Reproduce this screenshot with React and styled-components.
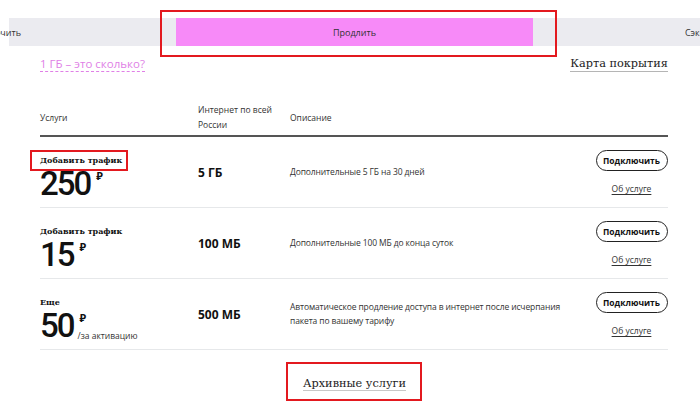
import styled, { createGlobalStyle } from "styled-components";

//<---------------------------------------Start of CSS - styling------------------------------------------------>

const GlobalStyle = createGlobalStyle`
  html, body {
    margin: 0;
    padding: 0;
    background: #ffffff;
  }
  body {
    font-family: "Open Sans", "Noto Sans", Arial, sans-serif;
    color: #222;
  }
`;

const Page = styled.div`
  width: 100%;
  height: 411px;
  overflow: hidden;
  padding-top: 18px;
  box-sizing: border-box;
`;

const Switcher = styled.div`
  display: flex;
  justify-content: center;
  background: #ebebf0;
  height: 28px;
  margin-left: 9px;
`;

const Segment = styled.div`
  position: relative;
  flex: 0 0 357px;
  display: flex;
  align-items: center;
  justify-content: center;
  font-size: 9px;
  color: #333;
  background: ${props => props.active ? "#f78af8" : "transparent"};

  &::after {
    content: ${props => props.marked ? "''" : "none"};
    position: absolute;
    top: -8px;
    bottom: -11px;
    left: -16px;
    right: -24px;
    border: 2px solid #e3191f;
    pointer-events: none;
  }
`;

const Content = styled.div`
  width: 628px;
  margin-left: 40px;
`;

const Links = styled.div`
  display: flex;
  justify-content: space-between;
  align-items: center;
  margin-top: 10px;
  height: 16px;
`;

const HowMuch = styled.span`
  font-size: 11.5px;
  color: #e07fe6;
  border-bottom: 1px dashed #e07fe6;
  line-height: 14px;
`;

const MapLink = styled.span`
  font-family: "DejaVu Serif", "Liberation Serif", serif;
  font-size: 11.3px;
  color: #222;
  line-height: 14px;
  border-bottom: 1px solid #b5b5b5;
`;

const Head = styled.div`
  display: flex;
  align-items: center;
  margin-top: 30px;
  padding-bottom: 3px;
  border-bottom: 2px solid #555;
  font-size: 8.5px;
  line-height: 15px;
  color: #333;
`;

const Col = styled.div`
  flex: ${props => props.grow ? "1" : `0 0 ${props.w}px`};
  box-sizing: border-box;
`;

const Row = styled.div`
  display: flex;
  align-items: center;
  height: 70px;
  border-bottom: 1px solid #e6e8ea;
`;

const Label = styled.div`
  position: relative;
  display: inline-block;
  font-family: "DejaVu Serif", "Liberation Serif", serif;
  font-weight: 700;
  font-size: 8px;
  line-height: 11px;
  color: #111;
  margin-bottom: 2px;

  &::after {
    content: ${props => props.marked ? "''" : "none"};
    position: absolute;
    top: -5px;
    bottom: -5px;
    left: -10px;
    right: -6px;
    border: 2px solid #e3191f;
  }
`;

const Price = styled.div`
  display: flex;
  align-items: stretch;
`;

const Amount = styled.span`
  font-family: Roboto, "Open Sans", sans-serif;
  font-size: 33px;
  font-weight: 500;
  line-height: 31px;
  letter-spacing: -2px;
  color: #111;
`;

const Side = styled.div`
  display: flex;
  flex-direction: column;
  justify-content: space-between;
  margin-left: 6px;
  padding: 3px 0 0;
`;

const Rub = styled.span`
  font-size: 11px;
  font-weight: 700;
  line-height: 10px;
  color: #111;
`;

const PerText = styled.span`
  font-size: 8.5px;
  line-height: 10px;
  color: #333;
  margin-left: -2px;
`;

const Volume = styled.div`
  font-size: 12px;
  font-weight: 700;
  color: #111;
`;

const Desc = styled.div`
  font-size: 8.5px;
  line-height: 14px;
  letter-spacing: -0.12px;
  color: #333;
  max-width: 290px;
`;

const Actions = styled.div`
  display: flex;
  flex-direction: column;
  align-items: center;
  gap: 13px;
`;

const ConnectButton = styled.button`
  width: 72px;
  height: 21px;
  border: 1.5px solid #222;
  border-radius: 11px;
  background: #fff;
  font-family: inherit;
  font-size: 8.5px;
  font-weight: 700;
  color: #111;
  padding: 0;
  cursor: pointer;
`;

const About = styled.span`
  font-size: 8.5px;
  color: #333;
  text-decoration: underline;
  text-underline-offset: 2px;
  line-height: 10px;
`;

const Bottom = styled.div`
  display: flex;
  justify-content: center;
  margin-top: 12px;
`;

const ArchiveBox = styled.div`
  border: 2px solid #e3191f;
  padding: 6px 14px 7px 15px;
`;

const Archive = styled.span`
  font-family: "DejaVu Serif", "Liberation Serif", serif;
  font-size: 11.3px;
  line-height: 15px;
  color: #222;
  border-bottom: 1px solid #c8c8c8;
`;

//<---------------------------------------End of CSS - styling------------------------------------------------>

const services = [
    {label: "Добавить трафик", amount: "250", volume: "5 ГБ", desc: "Дополнительные 5 ГБ на 30 дней", marked: true},
    {label: "Добавить трафик", amount: "15", volume: "100 МБ", desc: "Дополнительные 100 МБ до конца суток"},
    {label: "Еще", amount: "50", per: "/за активацию", volume: "500 МБ", desc: "Автоматическое продление доступа в интернет после исчерпания пакета по вашему тарифу"},
];

export default function App() {
    return (
        <Page>
            <GlobalStyle/>
            <Switcher>
                <Segment>Отсрочить</Segment>
                <Segment active marked>Продлить</Segment>
                <Segment>Сэкономить</Segment>
            </Switcher>
            <Content>
                <Links>
                    <HowMuch>1 ГБ – это сколько?</HowMuch>
                    <MapLink>Карта покрытия</MapLink>
                </Links>
                <Head>
                    <Col w={158}>Услуги</Col>
                    <Col w={92}>Интернет по всей<br/>России</Col>
                    <Col grow>Описание</Col>
                    <Col w={73}/>
                </Head>
                {services.map((s, i) => (
                    <Row key={i}>
                        <Col w={158}>
                            <Label marked={s.marked}>{s.label}</Label>
                            <Price>
                                <Amount>{s.amount}</Amount>
                                <Side>
                                    <Rub>₽</Rub>
                                    {s.per && <PerText>{s.per}</PerText>}
                                </Side>
                            </Price>
                        </Col>
                        <Col w={92}><Volume>{s.volume}</Volume></Col>
                        <Col grow><Desc>{s.desc}</Desc></Col>
                        <Col w={73}>
                            <Actions>
                                <ConnectButton>Подключить</ConnectButton>
                                <About>Об услуге</About>
                            </Actions>
                        </Col>
                    </Row>
                ))}
                <Bottom>
                    <ArchiveBox>
                        <Archive>Архивные услуги</Archive>
                    </ArchiveBox>
                </Bottom>
            </Content>
        </Page>
    );
}
